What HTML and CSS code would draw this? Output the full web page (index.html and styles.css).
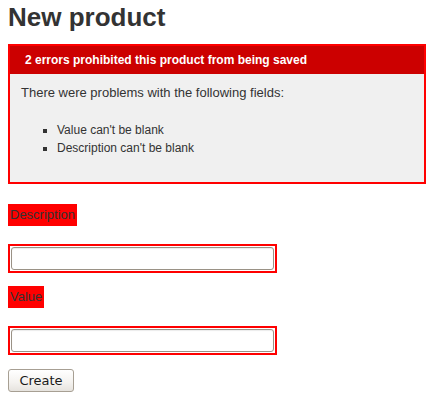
FILE: index.html
```html
<!DOCTYPE html>
<html>
<head>
<meta charset="utf-8">
<link rel="stylesheet" href="styles.css">
</head>
<body>
<h1 class="title">New product</h1>
<div class="errors">
  <h2 class="errors-head">2 errors prohibited this product from being saved</h2>
  <div class="errors-body">
    <p class="errors-intro">There were problems with the following fields:</p>
    <ul class="errors-list">
      <li>Value can't be blank</li>
      <li>Description can't be blank</li>
    </ul>
  </div>
</div>
<form class="form">
  <div class="field">
    <div class="label-err"><label for="d">Description</label></div>
    <div class="input-err"><input id="d" type="text" class="text-input"></div>
  </div>
  <div class="field">
    <div class="label-err"><label for="v">Value</label></div>
    <div class="input-err"><input id="v" type="text" class="text-input"></div>
  </div>
  <div class="actions">
    <button type="button" class="btn">Create</button>
  </div>
</form>
</body>
</html>
```
FILE: styles.css
```css
html, body {
  background: #fff;
}
body {
  margin: 8px;
  font-family: "Liberation Sans", Arial, sans-serif;
  font-size: 13px;
  line-height: 18px;
  color: #333;
}
.title {
  margin: 0 0 18px;
  font-size: 26px;
  line-height: 18px;
  font-weight: bold;
  color: #333;
}
.errors {
  width: 414px;
  border: 2px solid #ff0000;
  background: #f0f0f0;
  margin: 0 0 20px;
}
.errors-head {
  margin: 0;
  padding: 5px 15px;
  font-size: 12px;
  line-height: 18px;
  font-weight: bold;
  color: #fff;
  background: #cc0000;
}
.errors-body {
  padding: 10px 0 25px;
}
.errors-intro {
  margin: 0 0 19px 11px;
  font-size: 13px;
  line-height: 18px;
}
.errors-list {
  margin: 0;
  padding-left: 47px;
  font-size: 12px;
  line-height: 18px;
  list-style: square;
}
.form {
  margin: 0;
}
.field {
  margin-bottom: 13px;
}
.label-err {
  display: table;
  padding: 2px;
  background: #ff0000;
}
.label-err label {
  display: block;
  line-height: 18px;
}
.input-err {
  display: table;
  margin-top: 18px;
  border: 2px solid #ff0000;
  padding: 1px;
  background: #fff;
}
.text-input {
  display: block;
  box-sizing: border-box;
  width: 263px;
  height: 23px;
  margin: 0;
  border: 1px solid #9a9286;
  border-radius: 3px;
  background: #fff;
  box-shadow: inset 0 1px 1px rgba(0,0,0,0.08);
  font-family: "DejaVu Sans", sans-serif;
  font-size: 13px;
  padding: 1px 3px;
}
.actions {
  margin-top: 14px;
}
.btn {
  box-sizing: border-box;
  width: 66px;
  height: 23px;
  margin: 0;
  padding: 0;
  border: 1px solid #a79f93;
  border-radius: 3px;
  background: linear-gradient(#ffffff, #f4f2ef 60%, #e6e3de);
  font-family: "DejaVu Sans", sans-serif;
  font-size: 13px;
  color: #1a1a1a;
  line-height: 21px;
}
```
